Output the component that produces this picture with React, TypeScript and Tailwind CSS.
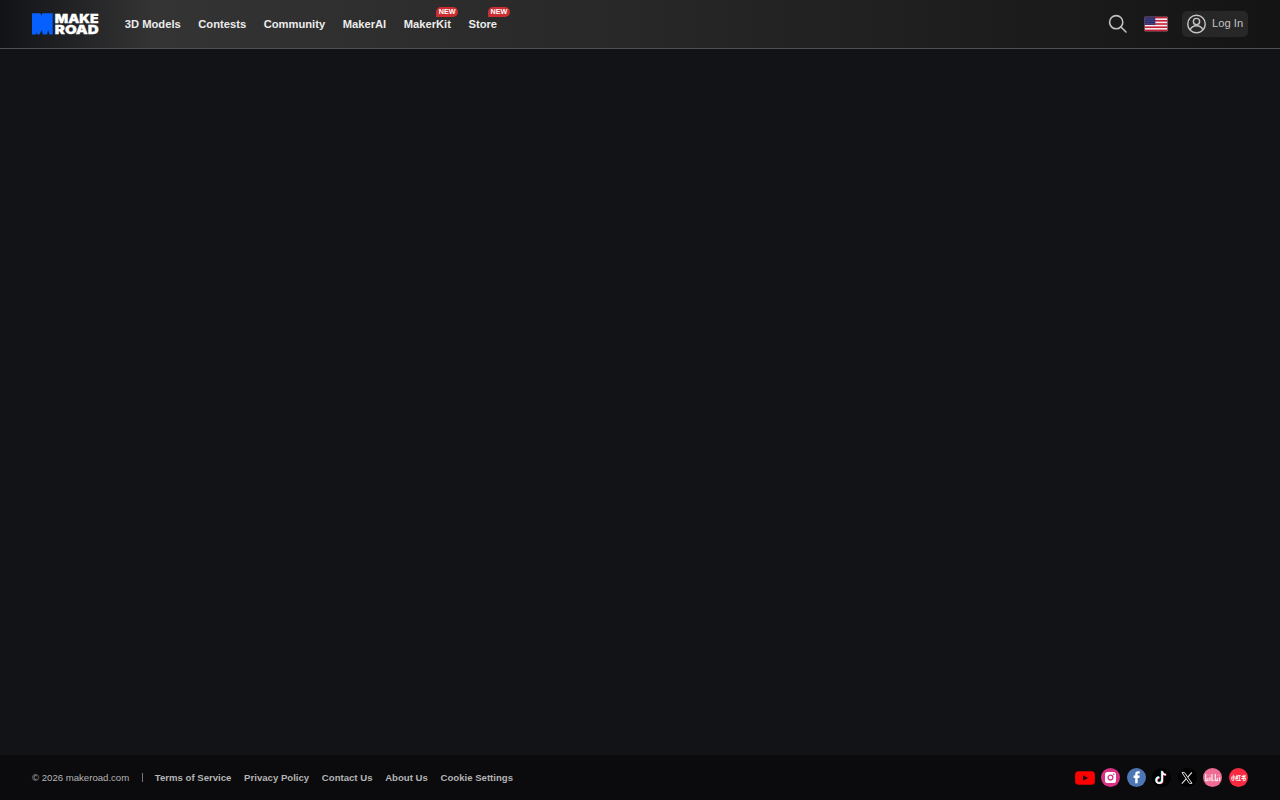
import type { ReactNode } from 'react';
import clsx from 'clsx';

interface NavItem {
  label: string;
  badgePosition?: string;
}

const navItems: NavItem[] = [
  { label: '3D Models' },
  { label: 'Contests' },
  { label: 'Community' },
  { label: 'MakerAI' },
  { label: 'MakerKit', badgePosition: '-right-[7.5px]' },
  { label: 'Store', badgePosition: '-right-[13.2px]' },
];

const footerLinks = ['Terms of Service', 'Privacy Policy', 'Contact Us', 'About Us', 'Cookie Settings'];

function Logo() {
  return (
    <svg width="67" height="22" viewBox="0 0 67 22" className="overflow-visible" aria-label="Make Road">
      <path d="M0 .3h8.6l.7 2.6L10.4.3h10.3V21.600h-3.200l-1.400-4.600-1 4.600h-4.200L9.700 17 7.600 21.600H5.400l-.5-2-.7 2H0z" fill="#0560fd" />
      <g fill="#fff" stroke="#fff" strokeWidth=".3" fontFamily="Inter, 'Liberation Sans', sans-serif" fontWeight="900" fontSize="12">
        <text x="22.8" y="9.5" textLength="43.8" lengthAdjust="spacingAndGlyphs">MAKE</text>
        <text x="22.8" y="21.1" textLength="44" lengthAdjust="spacingAndGlyphs">ROAD</text>
      </g>
    </svg>
  );
}

function SearchIcon() {
  return (
    <svg width="20" height="20" viewBox="0 0 20 20" fill="none" stroke="#c0c0c0" strokeWidth="1.6" strokeLinecap="round">
      <circle cx="8.2" cy="8.2" r="6.6" />
      <path d="M13 13l5 5" />
    </svg>
  );
}

function FlagIcon() {
  return (
    <svg width="24" height="16" viewBox="0 0 24 16">
      <rect x=".7" y=".8" width="22.7" height="14.4" fill="#f3edef" />
      {[0, 1, 2, 3, 4].map((row) => (
        <rect key={row} x=".7" y={0.8 + row * 3.2} width="22.7" height="1.6" fill="#c61f38" />
      ))}
      <rect x=".7" y=".8" width="10.600" height="8" fill="#29286b" />
      {[0, 1, 2, 3].map((row) =>
        [0, 1, 2, 3, 4].map((col) => (
          <circle key={`${row}-${col}`} cx={2 + col * 2} cy={1.9 + row * 1.9} r=".4" fill="#b9b8d6" />
        )),
      )}
    </svg>
  );
}

function UserIcon() {
  return (
    <svg width="19" height="20" viewBox="0 0 20 20" fill="none" stroke="#c4c4c4" strokeWidth="1.5">
      <circle cx="10" cy="10" r="9.2" />
      <circle cx="10" cy="7.4" r="3.3" />
      <path d="M3.3 16.2c1.2-3.1 3.7-4.4 6.7-4.4s5.5 1.3 6.7 4.4" />
    </svg>
  );
}

function SocialIcon({ children, className }: { children: ReactNode; className: string }) {
  return (
    <a href="#" className={clsx('flex h-[19px] w-[19px] items-center justify-center rounded-full', className)}>
      {children}
    </a>
  );
}

function SocialLinks() {
  return (
    <div className="flex items-center gap-[6.6px]">
      <a href="#" className="-mr-[.6px]" aria-label="YouTube">
        <svg width="20" height="14" viewBox="0 0 20 14">
          <path d="M3 .2h14q2.600.2 2.800 2.600.2 4.200 0 8.400-.2 2.400-2.800 2.600H3Q.4 13.600.2 11.200q-.2-4.200 0-8.400Q.4.400 3 .2z" fill="#fe0000" />
          <path d="M8 4.300v5.400L13 7z" fill="#1a0a0a" />
        </svg>
      </a>
      <SocialIcon className="bg-[#d93283]">
        <svg width="11" height="11" viewBox="0 0 11 11" fill="none">
          <rect width="11" height="11" rx="2.6" fill="#fff" />
          <circle cx="5.5" cy="5.6" r="2.4" stroke="#d93283" strokeWidth="1.3" />
          <circle cx="8.7" cy="2.3" r=".8" fill="#d93283" />
        </svg>
      </SocialIcon>
      <SocialIcon className="bg-[#4d76b5]">
        <svg width="19" height="19" viewBox="0 0 19 19" fill="#fff">
          <path d="M8.2 15.2V10H6.6V7.6h1.6V6.300c0-2.100 1-3.100 2.900-3.100.7 0 1.200.05 1.600.1v2.100h-1c-.8 0-1.100.4-1.100 1.100v1.100h2.100l-.3 2.400h-1.800v5.200z" />
        </svg>
      </SocialIcon>
      <SocialIcon className="bg-black">
        <svg width="19" height="19" viewBox="0 0 19 19" fill="none" strokeWidth="1.7">
          <path d="M9.700 2.800v9a2.900 2.900 0 1 1-2.900-2.900M9.700 2.800c.1 2 1.400 3.300 3.500 3.500" stroke="#28dfe2" />
          <path d="M10.700 3.600v9a2.900 2.900 0 1 1-2.900-2.900M10.700 3.600c.1 2 1.400 3.200 3.700 3.400" stroke="#ee294f" />
          <path d="M10.200 3.200v9a2.900 2.900 0 1 1-2.900-2.900M10.200 3.200c.1 2 1.400 3.300 3.700 3.500" stroke="#fff" />
        </svg>
      </SocialIcon>
      <SocialIcon className="bg-black">
        <svg width="12" height="12" viewBox="0 0 11 11" fill="none" stroke="#e5e5e5">
          <path d="M.9.6h2.400l6.800 9.800H7.700z" strokeWidth=".9" />
          <path d="M10 .3 6.200 4.700M4.700 6.400.7 10.700" strokeWidth="1" />
        </svg>
      </SocialIcon>
      <SocialIcon className="bg-[#ee6b94]">
        <svg width="19" height="19" viewBox="0 0 19 19" fill="none" stroke="#ffe0ea" strokeWidth="1.3" strokeLinecap="round">
          <path d="M2.700 6.500v6h2.200v-2M7 9.500v3M9 6.500v6h1.200M12.300 6.500v6h2.200v-2M16.600 9.500v3" />
          <path d="M5 7v.5M7 7v.5M14.600 7v.5M16.600 7v.5" strokeWidth=".8" opacity=".6" />
        </svg>
      </SocialIcon>
      <SocialIcon className="bg-[#fa2942]">
        <svg width="19" height="19" viewBox="0 0 19 19">
          <text x="1.9" y="11.5" textLength="15.2" lengthAdjust="spacingAndGlyphs" fill="#fff" fontSize="5.5" fontWeight="900" fontFamily="'Noto Sans CJK SC', sans-serif">小红书</text>
        </svg>
      </SocialIcon>
    </div>
  );
}

function Header() {
  return (
    <header className="flex h-[49px] shrink-0 items-center justify-between border-b border-[#505158] bg-[linear-gradient(90deg,#121317_0%,#343434_12%,#292929_45%,#141414_100%)] px-8">
      <div className="flex items-center">
        <Logo />
        <nav className="ml-[25.8px] flex gap-[17.5px] text-[11.2px] leading-4 font-bold text-[#ececec]">
          {navItems.map((item) => (
            <a key={item.label} href="#" className="relative whitespace-nowrap">
              {item.label}
              {item.badgePosition && (
                <span
                  className={clsx(
                    'absolute -top-[9px] flex h-[10px] w-[22.5px] items-center justify-center rounded-[5px] rounded-bl-none bg-[#cb2e31] text-[7.2px] leading-none text-white',
                    item.badgePosition,
                  )}
                >
                  NEW
                </span>
              )}
            </a>
          ))}
        </nav>
      </div>
      <div className="flex items-center">
        <button type="button" aria-label="Search">
          <SearchIcon />
        </button>
        <button type="button" className="ml-4" aria-label="Language">
          <FlagIcon />
        </button>
        <button type="button" className="ml-3.5 flex h-[26px] w-[66px] items-center gap-1.5 rounded-[5px] bg-[#272727] pl-[5px] text-[11.2px] whitespace-nowrap text-[#c4c4c4]">
          <UserIcon />
          <span className="pb-0.5">Log In</span>
        </button>
      </div>
    </header>
  );
}

function Footer() {
  return (
    <footer className="flex h-[45px] shrink-0 items-center justify-between bg-[#0b0b0d] px-8 text-[9.6px] leading-3 text-[#b4b4b4]">
      <div className="flex items-center">
        <span>© 2026 makeroad.com</span>
        <span className="mr-[11.8px] ml-[12.8px] h-[9px] w-px bg-[#77777a]" />
        <div className="flex gap-[12.7px] font-bold">
          {footerLinks.map((link) => (
            <a key={link} href="#">{link}</a>
          ))}
        </div>
      </div>
      <SocialLinks />
    </footer>
  );
}

export default function App() {
  return (
    <div className="flex h-screen flex-col overflow-hidden bg-[#121316] font-['Liberation_Sans',Arial,sans-serif]">
      <Header />
      <main className="flex-1" />
      <Footer />
    </div>
  );
}
